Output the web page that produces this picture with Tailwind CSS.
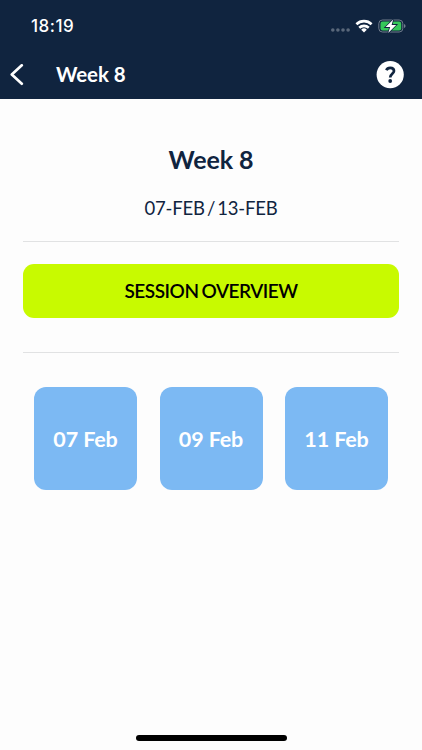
<!DOCTYPE html>
<html lang="en">
<head>
<meta charset="utf-8">
<meta name="viewport" content="width=device-width, initial-scale=1">
<title>Week 8</title>
<script src="https://cdn.jsdelivr.net/npm/@tailwindcss/browser@4"></script>
</head>
<body class="bg-[#fdfdfd] font-['Lato',sans-serif] text-[#10243f]">
<div class="flex h-[750px] w-[422px] flex-col overflow-hidden">
  <header class="h-[99px] shrink-0 bg-[#10243f] text-white">
    <div class="flex h-[50px] items-center justify-between pt-[2px] pr-[16px] pl-[31px]">
      <span class="font-['Inter',sans-serif] text-[17px] leading-5 font-medium tracking-[0.5px]">18:19</span>
      <div class="flex items-center">
        <svg class="h-[20px] w-[76px]" viewBox="0 0 76 20" fill="none">
          <g fill="#5a687b"><circle cx="2.8" cy="14" r="1.8"/><circle cx="7.9" cy="14" r="1.8"/><circle cx="13" cy="14" r="1.8"/><circle cx="18.1" cy="14" r="1.8"/></g>
          <g stroke="#fff" stroke-width="2.6"><path d="M26.4 8.2A11 11 0 0 1 41.6 8.2"/><path d="M29.2 11.7A7.2 7.2 0 0 1 38.8 11.7"/></g>
          <path d="M34 16.4L31.2 13.7A4 4 0 0 1 36.8 13.7Z" fill="#fff"/>
          <rect x="48.8" y="4" width="24" height="12" rx="3.6" stroke="#717d8d" stroke-width="1"/>
          <rect x="50.5" y="5.6" width="20.7" height="8.9" rx="2.1" fill="#35c759"/>
          <path d="M74 8Q75.6 8.5 75.6 10T74 12Z" fill="#717d8d"/>
          <path d="M63.2 3.6L55.6 11.1H60.2L58.2 17L66.2 8.9H61.6Z" fill="#fff" stroke="#10243f" stroke-width="1.6" paint-order="stroke"/>
        </svg>
      </div>
    </div>
    <div class="flex h-[49px] items-center pr-[18px] pl-[10px]">
      <svg class="h-[22px] w-[14px]" viewBox="0 0 14 22" fill="none" stroke="#fff" stroke-width="2.7" stroke-linecap="round" stroke-linejoin="round"><path d="M11.8 1.3L1.8 10.5L11.8 19.7"/></svg>
      <h1 class="relative -top-px ml-[32px] flex-1 text-[20.5px] leading-6 font-bold tracking-[-0.1px]">Week 8</h1>
      <svg class="h-[28px] w-[28px]" viewBox="0 0 28 28" fill="none"><circle cx="14.2" cy="13.7" r="13.6" fill="#fff"/><path d="M10.4 9.2C11 7.6 12.3 6.8 14.2 6.8C16.6 6.8 18 8.1 18 10C18 12.6 14.2 13 14.2 16.4" stroke="#10243f" stroke-width="2.7"/><circle cx="14.2" cy="20" r="1.9" fill="#10243f"/></svg>
    </div>
  </header>
  <main class="flex flex-1 flex-col px-[23px] pt-[44px]">
    <h2 class="text-center text-[25px] leading-8 font-bold tracking-[-0.1px]">Week 8</h2>
    <p class="mt-[21px] text-center text-[18.5px] leading-6 tracking-[-0.2px] [word-spacing:-2.4px]">07-FEB / 13-FEB</p>
    <hr class="mt-[20.5px] border-t border-[#e1e2e3]">
    <button class="mt-[22.5px] h-[54px] w-full rounded-[11px] bg-[#c8fa00] pt-[1px] text-[19px] font-semibold tracking-[-0.48px] text-black [word-spacing:-1.2px]">SESSION OVERVIEW</button>
    <hr class="mt-[34px] border-t border-[#e1e2e3]">
    <div class="mt-[34px] flex justify-between px-[11px] text-[21.5px] font-bold tracking-[-0.1px] text-white [word-spacing:-1px]">
      <button class="h-[103px] w-[103px] rounded-[12px] bg-[#7cb9f3] pt-[2px]">07 Feb</button>
      <button class="h-[103px] w-[103px] rounded-[12px] bg-[#7cb9f3] pt-[2px]">09 Feb</button>
      <button class="h-[103px] w-[103px] rounded-[12px] bg-[#7cb9f3] pt-[2px]">11 Feb</button>
    </div>
    <div class="mt-auto mb-[9px] h-[6px] w-[151px] self-center rounded-full bg-black"></div>
  </main>
</div>
</body>
</html>
